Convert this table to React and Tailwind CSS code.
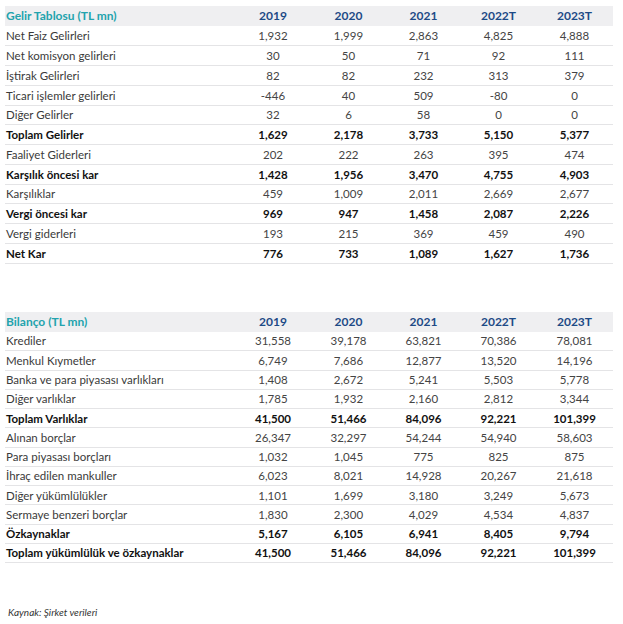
import React from "react";

const years = ["2019", "2020", "2021", "2022T", "2023T"];
const yearWidths = ["w-[76px]", "w-[75px]", "w-[75px]", "w-[75px]", "w-[77px]"];

const gelirRows = [
  { label: "Net Faiz Gelirleri", values: ["1,932", "1,999", "2,863", "4,825", "4,888"] },
  { label: "Net komisyon gelirleri", values: ["30", "50", "71", "92", "111"] },
  { label: "İştirak Gelirleri", values: ["82", "82", "232", "313", "379"] },
  { label: "Ticari işlemler gelirleri", values: ["-446", "40", "509", "-80", "0"] },
  { label: "Diğer Gelirler", values: ["32", "6", "58", "0", "0"] },
  { label: "Toplam Gelirler", values: ["1,629", "2,178", "3,733", "5,150", "5,377"], bold: true },
  { label: "Faaliyet Giderleri", values: ["202", "222", "263", "395", "474"] },
  { label: "Karşılık öncesi kar", values: ["1,428", "1,956", "3,470", "4,755", "4,903"], bold: true },
  { label: "Karşılıklar", values: ["459", "1,009", "2,011", "2,669", "2,677"] },
  { label: "Vergi öncesi kar", values: ["969", "947", "1,458", "2,087", "2,226"], bold: true },
  { label: "Vergi giderleri", values: ["193", "215", "369", "459", "490"] },
  { label: "Net Kar", values: ["776", "733", "1,089", "1,627", "1,736"], bold: true },
];

const bilancoRows = [
  { label: "Krediler", values: ["31,558", "39,178", "63,821", "70,386", "78,081"] },
  { label: "Menkul Kıymetler", values: ["6,749", "7,686", "12,877", "13,520", "14,196"] },
  { label: "Banka ve para piyasası varlıkları", values: ["1,408", "2,672", "5,241", "5,503", "5,778"] },
  { label: "Diğer varlıklar", values: ["1,785", "1,932", "2,160", "2,812", "3,344"] },
  { label: "Toplam Varlıklar", values: ["41,500", "51,466", "84,096", "92,221", "101,399"], bold: true },
  { label: "Alınan borçlar", values: ["26,347", "32,297", "54,244", "54,940", "58,603"] },
  { label: "Para piyasası borçları", values: ["1,032", "1,045", "775", "825", "875"] },
  { label: "İhraç edilen mankuller", values: ["6,023", "8,021", "14,928", "20,267", "21,618"] },
  { label: "Diğer yükümlülükler", values: ["1,101", "1,699", "3,180", "3,249", "5,673"] },
  { label: "Sermaye benzeri borçlar", values: ["1,830", "2,300", "4,029", "4,534", "4,837"] },
  { label: "Özkaynaklar", values: ["5,167", "6,105", "6,941", "8,405", "9,794"], bold: true },
  { label: "Toplam yükümlülük ve özkaynaklar", values: ["41,500", "51,466", "84,096", "92,221", "101,399"], bold: true },
];

function DataTable({ title, rows, rowClass }) {
  return (
    <table className="w-[608px] border-collapse table-fixed">
      <thead>
        <tr className="h-[20px] bg-[#efeff1]">
          <th className="w-[230px] pl-[1px] text-left text-[12px] font-bold text-[#23a3ad]">{title}</th>
          {years.map((y, i) => (
            <th key={y} className={`${yearWidths[i]} text-center text-[12px] font-bold text-[#1d4a86]`}>
              {y}
            </th>
          ))}
        </tr>
      </thead>
      <tbody>
        {rows.map((row, index) => (
          <tr key={index} className={`${rowClass} border-b border-[#e4e4e6]`}>
            <td
              className={`pl-[1px] text-left text-[11.5px] ${row.bold ? "font-bold text-[#111]" : "text-[#3a3a3a]"}`}
            >
              {row.label}
            </td>
            {row.values.map((v, i) => (
              <td
                key={i}
                className={`text-center text-[11.5px] ${row.bold ? "font-bold text-[#111]" : "text-[#444]"}`}
              >
                {v}
              </td>
            ))}
          </tr>
        ))}
      </tbody>
    </table>
  );
}

export default function App() {
  return (
    <div className="w-[623px] h-[624px] bg-white pl-[5px] pt-[6px] font-['Lato',sans-serif]">
      <DataTable title="Gelir Tablosu (TL mn)" rows={gelirRows} rowClass="h-[19.75px]" />
      <div className="h-[48px]" />
      <DataTable title="Bilanço (TL mn)" rows={bilancoRows} rowClass="h-[19.25px]" />
      <p className="mt-[42px] pl-[3px] text-[10px] italic text-[#333]">Kaynak: Şirket verileri</p>
    </div>
  );
}
